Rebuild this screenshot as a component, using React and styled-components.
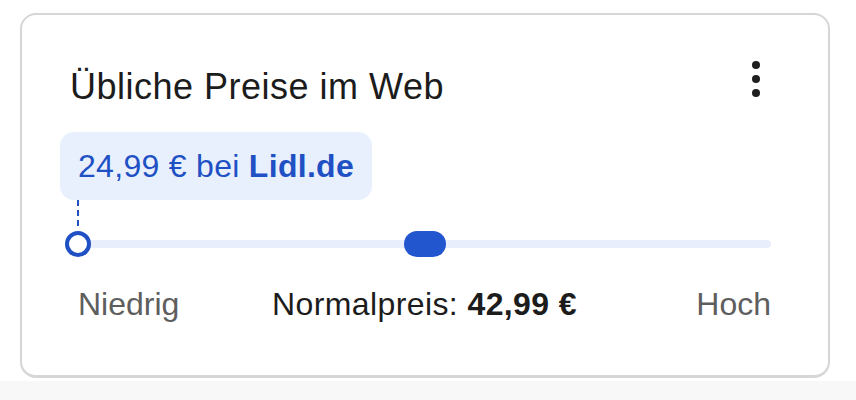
import React from 'react';
import styled, { createGlobalStyle } from 'styled-components';

const GlobalStyle = createGlobalStyle`
  html, body {
    margin: 0;
    padding: 0;
    background: #ffffff;
  }
  body {
    font-family: 'Liberation Sans', Arial, Helvetica, sans-serif;
    width: 856px;
    height: 400px;
    overflow: hidden;
  }
`;

const Page = styled.div`
  display: flex;
  flex-direction: column;
  height: 400px;
`;

const Stage = styled.div`
  padding: 13px 0 0 20px;
`;

const BottomStrip = styled.div`
  flex: 1;
  margin-top: 3px;
  background: #f8f8f8;
`;

const Card = styled.section`
  box-sizing: border-box;
  width: 810px;
  height: 365px;
  background: #ffffff;
  border: 2px solid #d6d6d6;
  border-bottom-width: 3px;
  border-radius: 16px;
  padding: 52px 57px 0 48px;
`;

const Header = styled.div`
  display: flex;
  align-items: center;
  justify-content: space-between;
`;

const Title = styled.h2`
  margin: 0;
  font-size: 36px;
  line-height: 40px;
  font-weight: 400;
  letter-spacing: 0.5px;
  color: #1c1c1c;
`;

const MenuButton = styled.button`
  display: flex;
  align-items: center;
  justify-content: center;
  width: 24px;
  height: 40px;
  margin-right: 3px;
  margin-top: -16px;
  padding: 0;
  border: none;
  background: none;
  color: #1f1f1f;
`;

const Body = styled.div`
  display: flex;
  flex-direction: column;
`;

const Tip = styled.div`
  display: inline-flex;
  align-self: flex-start;
  margin: 25px 0 0 -10px;
  padding: 16px 18px;
  border-radius: 14px;
  background: #e8f0fe;
  color: #1f50c4;
  font-size: 32px;
  line-height: 36px;
  letter-spacing: 0.3px;
  white-space: pre;

  b {
    font-weight: 700;
  }
`;

const Stem = styled.div`
  width: 2px;
  height: 30px;
  margin-left: 7px;
  background: repeating-linear-gradient(
    to bottom,
    #1f50c4 0 6px,
    transparent 6px 10px
  );
`;

const Slider = styled.div`
  position: relative;
  height: 28px;
  margin: 0 0 0 8px;
`;

const Track = styled.div`
  position: absolute;
  left: 0;
  right: 0;
  top: 10px;
  height: 8px;
  border-radius: 4px;
  background: #e8eefb;
`;

const LowMarker = styled.div`
  position: absolute;
  top: 1px;
  box-sizing: border-box;
  width: 26px;
  height: 26px;
  border: 4px solid #1f50c4;
  border-radius: 50%;
  background: #ffffff;
  transform: translateX(-50%);
`;

const Thumb = styled.div`
  position: absolute;
  top: 1px;
  width: 42px;
  height: 26px;
  border-radius: 13px;
  background: #2256cf;
  transform: translateX(-50%);
`;

const Labels = styled.div`
  display: grid;
  grid-template-columns: 1fr auto 1fr;
  margin: 26px 0 0 8px;
  font-size: 32px;
  line-height: 40px;
`;

const Edge = styled.span`
  color: #5e5e5e;
  justify-self: ${(p) => (p.$end ? 'end' : 'start')};
`;

const Typical = styled.span`
  color: #1c1c1c;
  letter-spacing: 0.4px;
  white-space: pre;

  b {
    font-weight: 700;
  }
`;

const MoreVert = () => (
  <svg width="10" height="38" viewBox="0 0 10 38" fill="currentColor">
    <circle cx="5" cy="5" r="4" />
    <circle cx="5" cy="19" r="4" />
    <circle cx="5" cy="33" r="4" />
  </svg>
);

const low = 24.99;
const typical = 42.99;
const min = 24.99;
const span = (typical - min) * 2;

export default function App() {
  const pos = (v) => `${((v - min) / span) * 100}%`;
  return (
    <Page>
      <GlobalStyle />
      <Stage>
        <Card>
          <Header>
            <Title>Übliche Preise im Web</Title>
            <MenuButton aria-label="Mehr">
              <MoreVert />
            </MenuButton>
          </Header>
          <Body>
            <Tip>
              24,99 € bei <b>Lidl.de</b>
            </Tip>
            <Stem />
            <Slider>
              <Track />
              <Thumb style={{ left: pos(typical) }} />
              <LowMarker style={{ left: pos(low) }} />
            </Slider>
            <Labels>
              <Edge>Niedrig</Edge>
              <Typical>
                Normalpreis: <b>42,99 €</b>
              </Typical>
              <Edge $end>Hoch</Edge>
            </Labels>
          </Body>
        </Card>
      </Stage>
      <BottomStrip />
    </Page>
  );
}
